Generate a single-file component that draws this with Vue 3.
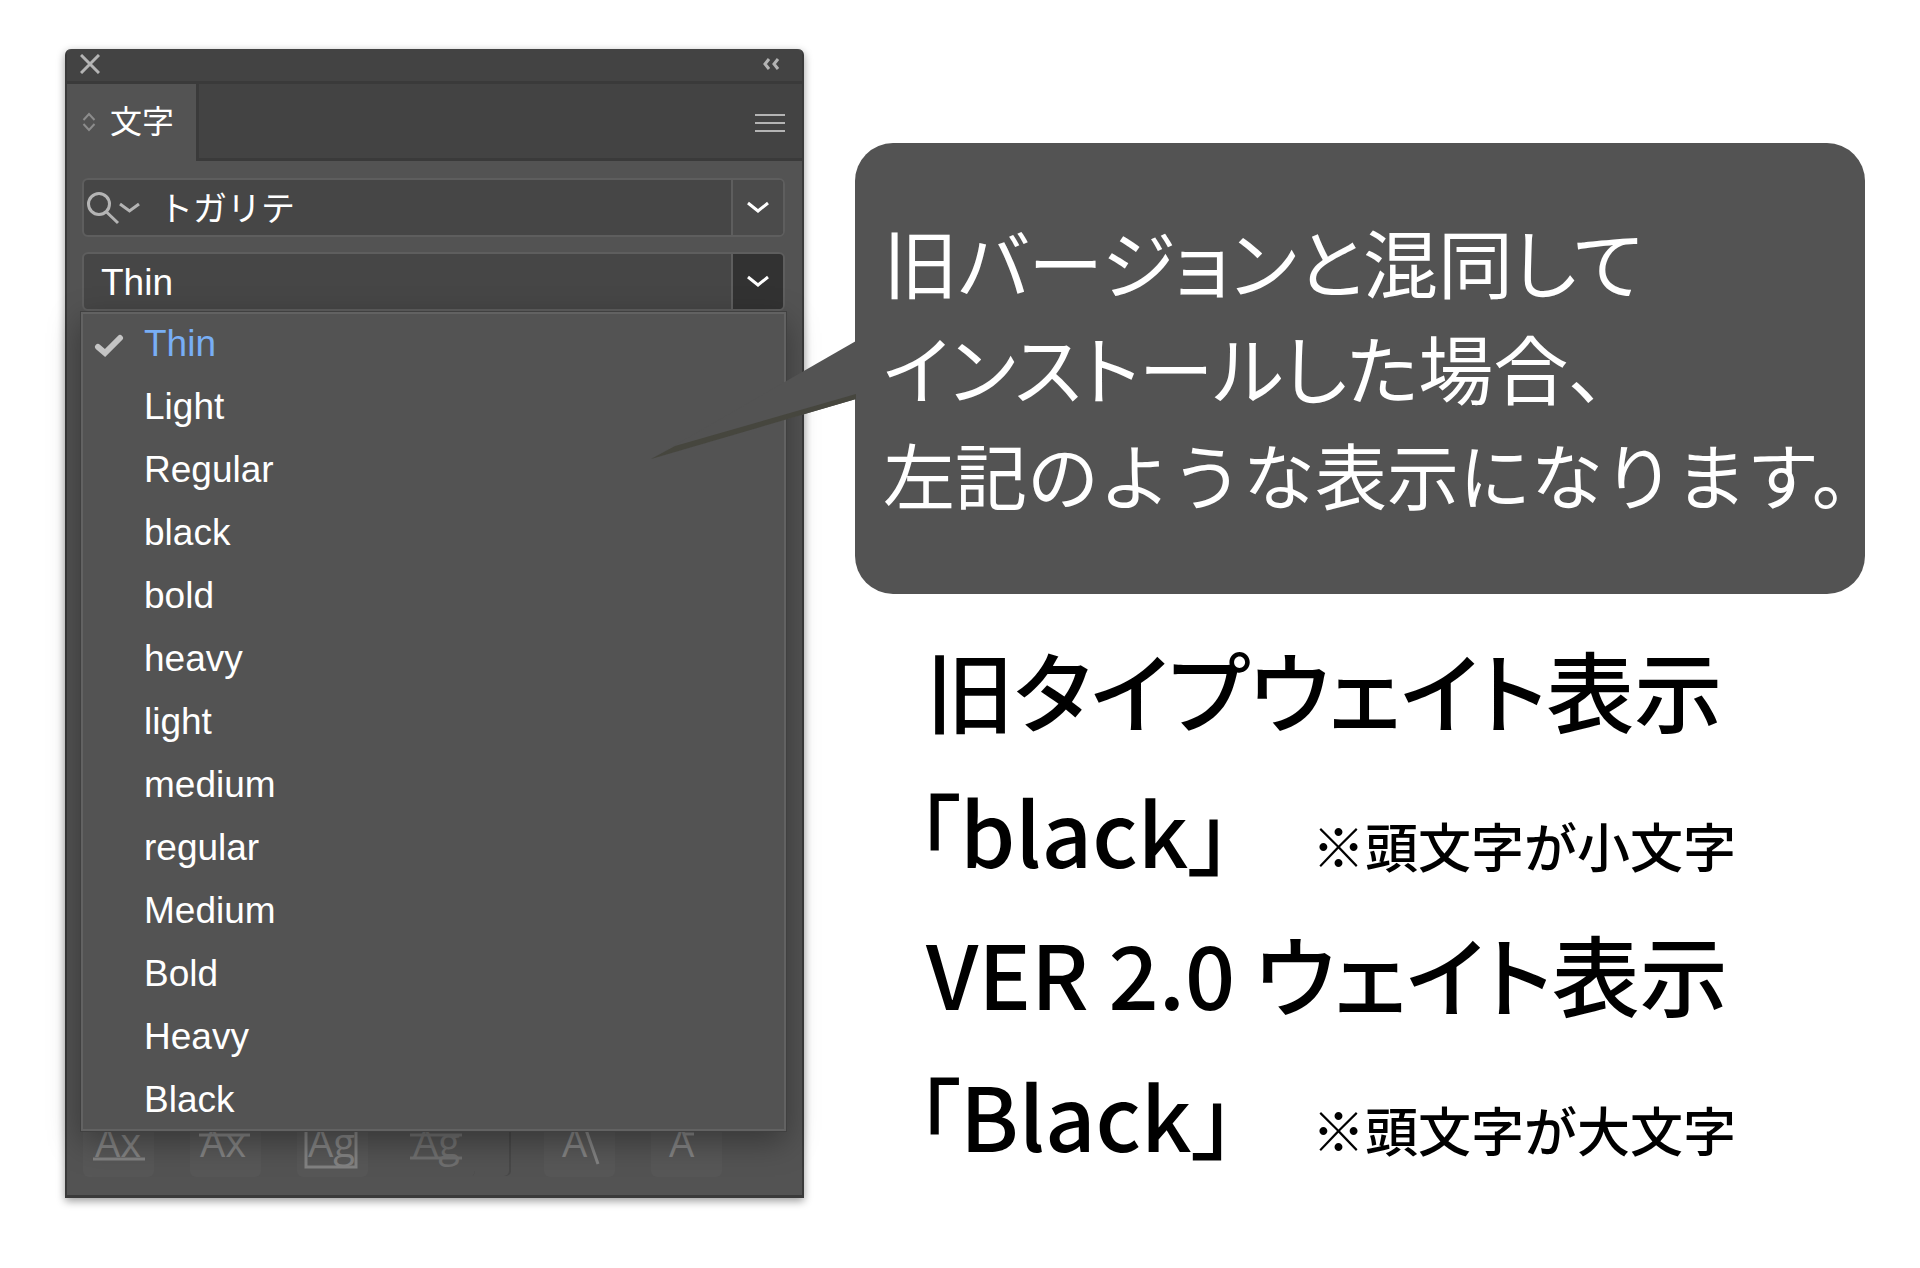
<template>
  <main class="page">
    <section class="panel">
      <header class="title-bar">
        <button class="icon-button" aria-label="閉じる">
          <svg width="20" height="20" viewBox="0 0 20 20">
            <path d="M1 1 L19 19 M19 1 L1 19" />
          </svg>
        </button>
        <button class="icon-button" aria-label="折りたたむ">
          <svg width="17" height="12" viewBox="0 0 17 12">
            <path d="M6 1 L2 6 L6 11 M15 1 L11 6 L15 11" />
          </svg>
        </button>
      </header>

      <div class="tab-bar">
        <button class="tab">
          <svg width="14" height="20" viewBox="0 0 14 20">
            <path d="M1.5 8 L7 2 L12.5 8 M1.5 12 L7 18 L12.5 12" />
          </svg>
          <span>文字</span>
        </button>
        <button class="icon-button menu-button" aria-label="メニュー">
          <svg width="30" height="20" viewBox="0 0 30 20">
            <path d="M0 2 H30 M0 10 H30 M0 18 H30" />
          </svg>
        </button>
      </div>

      <div class="panel-body">
        <div class="field">
          <svg class="search-icon" width="54" height="34" viewBox="0 0 54 34">
            <circle cx="12" cy="13" r="10.5" />
            <path d="M19.5 21 L31 32 M33 13 L42.5 20 L52 13" />
          </svg>
          <input v-model="family" class="family-input" aria-label="フォントファミリ" />
          <button class="arrow" aria-label="フォント一覧">
            <svg width="24" height="14" viewBox="0 0 24 14">
              <path d="M2 2 L12 10 L22 2" />
            </svg>
          </button>
        </div>

        <div class="field">
          <select v-model="selected" class="style-select" aria-label="フォントスタイル">
            <option v-for="weight in weights" :key="weight" :value="weight">{{ weight }}</option>
          </select>
          <span class="arrow open">
            <svg width="24" height="14" viewBox="0 0 24 14">
              <path d="M2 2 L12 10 L22 2" />
            </svg>
          </span>
        </div>

        <ul class="weight-list" role="listbox" aria-label="ウェイト">
          <li
            v-for="weight in weights"
            :key="weight"
            class="weight-item"
            :class="{ active: weight === selected }"
            role="option"
            :aria-selected="weight === selected"
            @click="selected = weight"
          >
            <svg v-if="weight === selected" class="check" width="30" height="24" viewBox="0 0 30 24">
              <path d="M4 13 L11 19 L26 4" />
            </svg>
            {{ weight }}
          </li>
        </ul>

        <!-- glyph snap buttons, partly under the list -->
        <div class="snap-bar">
          <button v-for="tool in tools" :key="tool.name" class="snap" :class="tool.name" :aria-label="tool.name">
            <svg width="71" height="71" viewBox="0 0 71 71">
              <text :x="tool.x" y="51">{{ tool.text }}</text>
              <path :d="tool.lines" />
            </svg>
          </button>
        </div>
      </div>
    </section>

    <section class="notes">
      <div class="callout">
        <svg class="tail" width="205" height="120" viewBox="0 0 205 120">
          <polygon class="tail-face" points="0,118 205,0 205,58" />
          <polygon class="tail-edge" points="0,118 24,105 205,53 205,58" />
        </svg>
        <p class="callout-text">
          <span class="tight">旧バージョンと混同して</span>
          <span class="tight">インストールした場合、</span>
          <span>左記のような表示になります。</span>
        </p>
      </div>

      <div class="guide">
        <p class="line">旧タイプウェイト表示</p>
        <p class="line"><span class="quoted">「black」</span><small>※頭文字が小文字</small></p>
        <p class="line">VER 2.0 ウェイト表示</p>
        <p class="line"><span class="quoted">「Black」</span><small>※頭文字が大文字</small></p>
      </div>
    </section>
  </main>
</template>

<script setup>
import { ref } from 'vue'

const family = ref('トガリテ')
const selected = ref('Thin')

const weights = [
  'Thin', 'Light', 'Regular', 'black', 'bold', 'heavy', 'light',
  'medium', 'regular', 'Medium', 'Bold', 'Heavy', 'Black'
]

const tools = [
  { name: 'baseline', text: 'Ax', x: 12, lines: 'M10 53 H62' },
  { name: 'x-height', text: 'Ax', x: 10, lines: 'M9 29 H60' },
  { name: 'glyph-bounds', text: 'Ag', x: 11, lines: 'M9 10 V61 H59 V10' },
  { name: 'proximity', text: 'Ag', x: 9, lines: 'M6 29 H58 M6 52 H58' },
  { name: 'angular', text: 'A', x: 18, lines: 'M40 18 L54 58' },
  { name: 'anchor', text: 'A', x: 18, lines: 'M33 28 H43' }
]
</script>

<style>
body {
  margin: 0;
  background: #fff;
}
</style>

<style scoped>
.page {
  display: grid;
  grid-template-columns: minmax(0, 739fr) minmax(0, 1010fr);
  align-items: start;
  gap: 51px;
  padding: 49px 55px 70px 65px;
  font-family: "Liberation Sans", "Noto Sans CJK JP", sans-serif;
}
button, input, select {
  margin: 0;
  padding: 0;
  border: 0;
  background: none;
  color: inherit;
  font: inherit;
}
svg {
  display: block;
  fill: none;
  stroke: #b4b4b4;
  stroke-width: 2;
}
.panel {
  box-sizing: border-box;
  border: 2px solid #3a3a3a;
  border-top: 0;
  border-bottom-width: 3px;
  border-radius: 6px 6px 0 0;
  background: #535353;
  color: #fff;
  box-shadow: 0 3px 8px rgba(0, 0, 0, 0.4);
}
.title-bar {
  display: flex;
  align-items: center;
  justify-content: space-between;
  box-sizing: border-box;
  height: 35px;
  padding: 0 22px 2px 13px;
  border-bottom: 3px solid #3a3a3a;
  border-radius: 6px 6px 0 0;
  background: #434343;
}
.title-bar svg {
  stroke-width: 3;
}
.tab-bar {
  display: flex;
  height: 77px;
  background: #434343;
}
.tab {
  display: flex;
  align-items: center;
  gap: 14px;
  width: 132px;
  padding: 0 0 2px 15px;
  border-right: 3px solid #3a3a3a;
  background: #535353;
  font-size: 32px;
}
.tab span {
  padding-bottom: 6px;
}
.tab svg {
  stroke: #8c8c8c;
}
.menu-button {
  display: flex;
  flex: 1;
  align-items: center;
  justify-content: flex-end;
  padding: 3px 17px 0 0;
  border-bottom: 3px solid #3a3a3a;
}
.panel-body {
  padding: 17px 16px 18px 14px;
}
.field {
  display: flex;
  align-items: center;
  box-sizing: border-box;
  height: 59px;
  margin: 0 1px 15px;
  border: 2px solid #5e5e5e;
  border-radius: 6px;
  background: #464646;
  overflow: hidden;
}
.field + .field {
  margin-bottom: 1px;
}
.search-icon {
  margin-left: 3px;
  stroke-width: 3;
}
.family-input {
  flex: 1;
  min-width: 0;
  margin-left: 18px;
  padding-bottom: 2px;
  font-size: 34px;
  outline: none;
}
.style-select {
  flex: 1;
  min-width: 0;
  height: 55px;
  padding: 2px 0 0 17px;
  appearance: none;
  font-size: 37px;
  outline: none;
}
.arrow {
  display: flex;
  flex: none;
  align-items: center;
  justify-content: center;
  box-sizing: border-box;
  width: 52px;
  height: 55px;
  border-left: 2px solid #5e5e5e;
  background: #4b4b4b;
}
.arrow.open {
  background: #323232;
}
.arrow svg {
  stroke: #fff;
  stroke-width: 3;
}
.weight-list {
  position: relative;
  z-index: 1;
  margin: 0;
  padding: 0;
  background: #535353;
  box-shadow: inset 0 0 0 2px #626262, 0 0 0 1px #404040, 0 10px 30px rgba(0, 0, 0, 0.35);
  list-style: none;
}
.weight-item {
  position: relative;
  padding-left: 63px;
  font-size: 37px;
  line-height: 63px;
}
.weight-item.active {
  color: #78aef5;
}
.check {
  position: absolute;
  top: 22px;
  left: 13px;
  stroke: #c4c4c4;
  stroke-width: 6;
  stroke-linecap: round;
}
.snap-bar {
  display: flex;
  gap: 36px;
  margin-top: -25px;
  padding-left: 2px;
}
.snap {
  border-radius: 6px;
  background: #575757;
}
.snap svg {
  stroke: #828282;
  stroke-width: 3;
}
.snap text {
  fill: #828282;
  stroke: none;
  font-family: "Open Sans", sans-serif;
  font-size: 40px;
}
.proximity {
  margin-right: 33px;
  background: none;
  box-shadow: 35px 0 0 -1px #535353, 37px 0 0 -1px #484848;
}
.proximity svg {
  opacity: 0.6;
}
.notes {
  padding-top: 94px;
  font-family: "Noto Sans CJK JP", sans-serif;
}
.callout {
  position: relative;
  display: flex;
  align-items: center;
  box-sizing: border-box;
  min-height: 451px;
  padding: 0 0 4px 28px;
  border-radius: 38px;
  background: #535353;
}
.tail {
  position: absolute;
  top: 198px;
  left: -204px;
  z-index: 2;
  stroke: none;
}
.tail-face {
  fill: #535353;
}
.tail-edge {
  fill: #46463e;
}
.callout-text {
  margin: 0;
  color: #fff;
  font-size: 72px;
  font-weight: 400;
  line-height: 106px;
  white-space: nowrap;
}
.callout-text span {
  display: block;
}
.callout-text .tight {
  font-size: 75px;
  font-feature-settings: "palt";
}
.guide {
  padding: 23px 0 0 71px;
}
.line {
  display: flex;
  align-items: baseline;
  margin: 0;
  color: #000;
  font-size: 88px;
  font-weight: 500;
  line-height: 142px;
  white-space: nowrap;
  font-feature-settings: "palt";
}
.quoted {
  width: 396px;
  margin-left: -10px;
}
.line small {
  font-size: 53px;
  line-height: 80px;
  font-feature-settings: normal;
}
</style>
